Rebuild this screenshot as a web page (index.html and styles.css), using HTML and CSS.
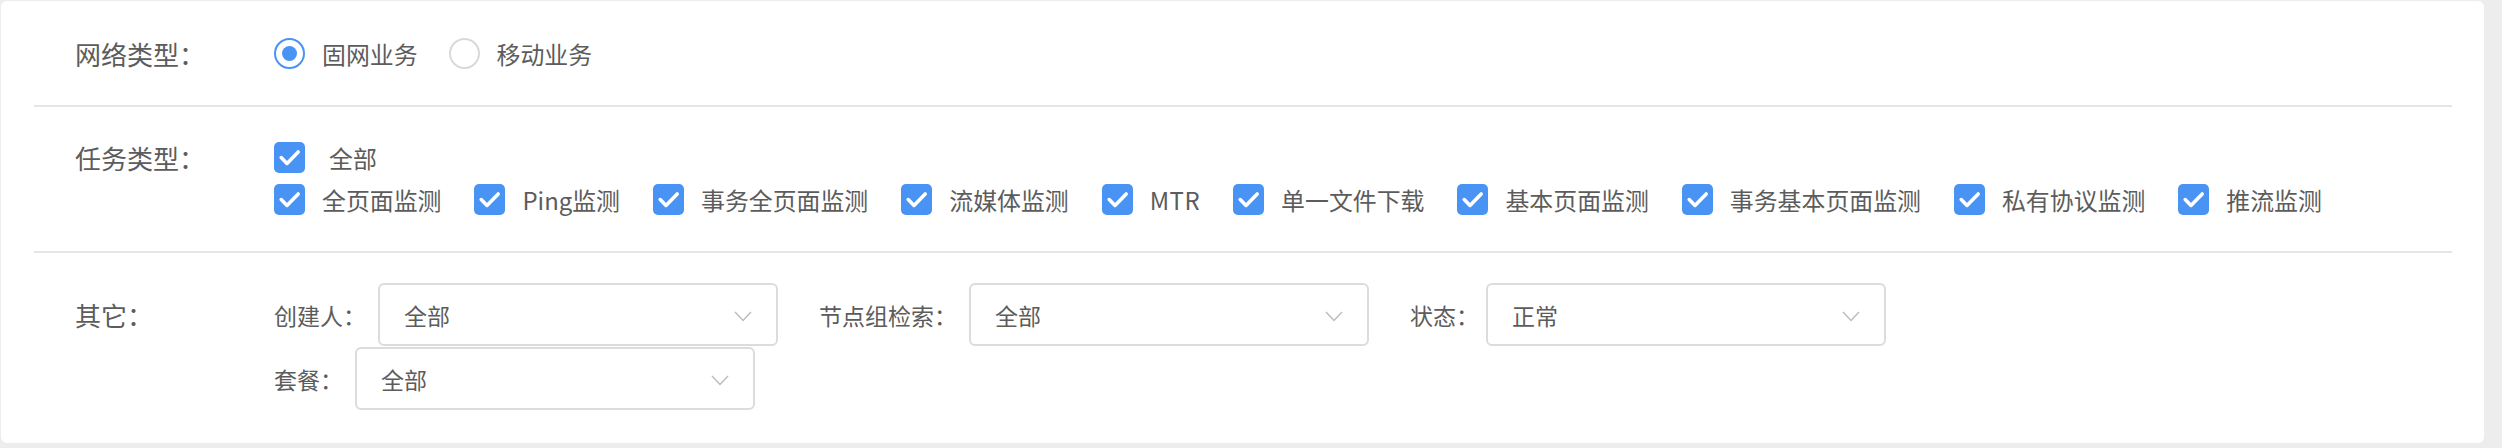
FILE: index.html
```html
<!DOCTYPE html>
<html lang="zh-CN">
<head>
<meta charset="utf-8">
<title>筛选</title>
<link rel="stylesheet" href="styles.css">
</head>
<body>
<div class="card">
  <div class="section sec-net">
    <div class="label">网络类型：</div>
    <div class="content options">
      <label class="opt radio-opt"><span class="radio on"></span><span class="txt">固网业务</span></label>
      <label class="opt radio-opt"><span class="radio"></span><span class="txt">移动业务</span></label>
    </div>
  </div>
  <div class="section sec-task">
    <div class="label">任务类型：</div>
    <div class="content stack">
      <div class="options">
        <label class="opt"><span class="cb"><svg viewBox="0 0 31 31"><path d="M7.2 15.6 L13 21.4 L24.2 10"/></svg></span><span class="txt txt-all">全部</span></label>
      </div>
      <div class="options">
        <label class="opt"><span class="cb"><svg viewBox="0 0 31 31"><path d="M7.2 15.6 L13 21.4 L24.2 10"/></svg></span><span class="txt">全页面监测</span></label>
        <label class="opt"><span class="cb"><svg viewBox="0 0 31 31"><path d="M7.2 15.6 L13 21.4 L24.2 10"/></svg></span><span class="txt">Ping监测</span></label>
        <label class="opt"><span class="cb"><svg viewBox="0 0 31 31"><path d="M7.2 15.6 L13 21.4 L24.2 10"/></svg></span><span class="txt">事务全页面监测</span></label>
        <label class="opt"><span class="cb"><svg viewBox="0 0 31 31"><path d="M7.2 15.6 L13 21.4 L24.2 10"/></svg></span><span class="txt">流媒体监测</span></label>
        <label class="opt"><span class="cb"><svg viewBox="0 0 31 31"><path d="M7.2 15.6 L13 21.4 L24.2 10"/></svg></span><span class="txt txt-latin">MTR</span></label>
        <label class="opt"><span class="cb"><svg viewBox="0 0 31 31"><path d="M7.2 15.6 L13 21.4 L24.2 10"/></svg></span><span class="txt">单一文件下载</span></label>
        <label class="opt"><span class="cb"><svg viewBox="0 0 31 31"><path d="M7.2 15.6 L13 21.4 L24.2 10"/></svg></span><span class="txt">基本页面监测</span></label>
        <label class="opt"><span class="cb"><svg viewBox="0 0 31 31"><path d="M7.2 15.6 L13 21.4 L24.2 10"/></svg></span><span class="txt">事务基本页面监测</span></label>
        <label class="opt"><span class="cb"><svg viewBox="0 0 31 31"><path d="M7.2 15.6 L13 21.4 L24.2 10"/></svg></span><span class="txt">私有协议监测</span></label>
        <label class="opt"><span class="cb"><svg viewBox="0 0 31 31"><path d="M7.2 15.6 L13 21.4 L24.2 10"/></svg></span><span class="txt">推流监测</span></label>
      </div>
    </div>
  </div>
  <div class="section sec-other">
    <div class="label label-tall">其它：</div>
    <div class="content fields">
      <div class="field-line">
        <div class="field">
          <span class="flabel">创建人：</span>
          <div class="select"><span class="val">全部</span><svg class="chev" viewBox="0 0 18 11"><path d="M1 1 L9 9.5 L17 1"/></svg></div>
        </div>
        <div class="field">
          <span class="flabel">节点组检索：</span>
          <div class="select"><span class="val">全部</span><svg class="chev" viewBox="0 0 18 11"><path d="M1 1 L9 9.5 L17 1"/></svg></div>
        </div>
        <div class="field">
          <span class="flabel flabel-tight">状态：</span>
          <div class="select"><span class="val">正常</span><svg class="chev" viewBox="0 0 18 11"><path d="M1 1 L9 9.5 L17 1"/></svg></div>
        </div>
      </div>
      <div class="field-line">
        <div class="field">
          <span class="flabel">套餐：</span>
          <div class="select"><span class="val">全部</span><svg class="chev" viewBox="0 0 18 11"><path d="M1 1 L9 9.5 L17 1"/></svg></div>
        </div>
      </div>
    </div>
  </div>
</div>
</body>
</html>
```

FILE: styles.css
```css
* { box-sizing: border-box; }

html, body {
  margin: 0;
  padding: 0;
  background: #ededed;
}

body {
  font-family: "Noto Sans CJK SC", "Noto Sans", sans-serif;
  color: #5c5c5c;
  width: 2502px;
  height: 448px;
  overflow: hidden;
}

.card {
  margin: 1px 18px 0 1px;
  height: 442px;
  background: #ffffff;
  border-radius: 6px;
  padding: 0 32px 0 33px;
}

.section {
  display: flex;
  align-items: flex-start;
}

.sec-net {
  height: 106px;
  padding-top: 37px;
  border-bottom: 2px solid #e5e5e5;
}

.sec-task {
  height: 146px;
  padding-top: 35px;
  border-bottom: 2px solid #e5e5e5;
}

.sec-other {
  padding-top: 30px;
}

.label {
  width: 240px;
  flex: none;
  padding-left: 41px;
  font-size: 26px;
  line-height: 31px;
  white-space: nowrap;
}

.label-tall {
  line-height: 63px;
}

.content {
  flex: 1;
  min-width: 0;
}

.options {
  display: flex;
  align-items: center;
  height: 31px;
}

.stack {
  display: flex;
  flex-direction: column;
  gap: 11px;
}

.opt {
  display: flex;
  align-items: center;
  margin-right: 33px;
  white-space: nowrap;
}

.radio-opt {
  margin-right: 31px;
}

.txt {
  margin-left: 17px;
  font-size: 23.9px;
  line-height: 31px;
}

.txt-all {
  margin-left: 24px;
}

.txt-latin {
  letter-spacing: 0.5px;
}

.radio {
  width: 31px;
  height: 31px;
  border-radius: 50%;
  border: 2px solid #d9d9d9;
  background: #fff;
  display: flex;
  align-items: center;
  justify-content: center;
  flex: none;
}

.radio.on {
  border-color: #4993f5;
}

.radio.on::after {
  content: "";
  width: 15px;
  height: 15px;
  border-radius: 50%;
  background: #4993f5;
}

.cb {
  width: 31px;
  height: 31px;
  border-radius: 5px;
  background: #4993f5;
  flex: none;
  display: flex;
}

.cb svg {
  width: 31px;
  height: 31px;
}

.cb path {
  fill: none;
  stroke: #ffffff;
  stroke-width: 3.6;
  stroke-linecap: round;
  stroke-linejoin: round;
}

.fields {
  display: flex;
  flex-direction: column;
  gap: 1px;
}

.field-line {
  display: flex;
  align-items: center;
}

.field {
  display: flex;
  align-items: center;
  margin-right: 41px;
}

.flabel {
  font-size: 23px;
  margin-right: 12px;
  white-space: nowrap;
}

.flabel-tight {
  margin-right: 7px;
}

.select {
  width: 400px;
  height: 63px;
  border: 2px solid #dcdcdc;
  border-radius: 6px;
  display: flex;
  align-items: center;
  justify-content: space-between;
  padding: 0 24px 0 24px;
}

.val {
  font-size: 23px;
}

.chev {
  width: 18px;
  height: 11px;
  margin-top: 4px;
}

.chev path {
  fill: none;
  stroke: #bdbdbd;
  stroke-width: 1.5;
}
```
